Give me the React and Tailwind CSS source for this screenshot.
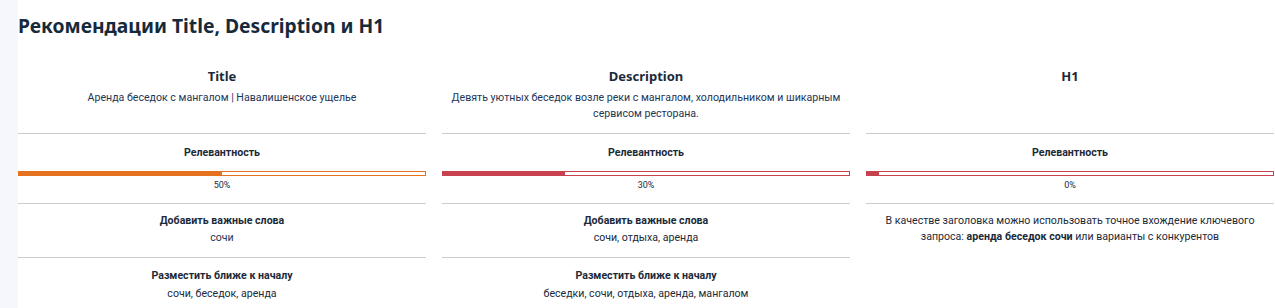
const columns = [
  {
    name: 'Title',
    text: 'Аренда беседок с мангалом | Навалишенское ущелье',
    percent: 50,
    fill: 50,
    color: 'orange',
  },
  {
    name: 'Description',
    text: 'Девять уютных беседок возле реки с мангалом, холодильником и шикарным сервисом ресторана.',
    percent: 30,
    fill: 30,
    color: 'red',
  },
  {
    name: 'H1',
    text: '',
    percent: 0,
    fill: 3,
    color: 'red',
  },
]

function Bar({ fill, color }) {
  const border = color === 'orange' ? 'border-[#e6711f]' : 'border-[#c8414f]'
  const bg = color === 'orange' ? 'bg-[#e6711f]' : 'bg-[#c8414f]'
  return (
    <div className={`h-[5px] w-full border ${border} bg-white`}>
      <div className={`h-full ${bg}`} style={{ width: `${fill}%` }} />
    </div>
  )
}

export default function App() {
  return (
    <div className="flex min-h-[308px] bg-white font-['Roboto',sans-serif] text-[#1b2a3a]">
      <div className="w-[18px] shrink-0 bg-[#f6f7fd]" />
      <div className="flex-1 pr-[1px]">
        <h2 className="pt-[12px] font-['Noto_Sans',sans-serif] text-[19.3px] font-bold leading-[27px] text-[#172a3c]">
          Рекомендации Title, Description и H1
        </h2>

        <div className="mt-[28px] grid grid-cols-3 gap-x-4 text-center">
          {columns.map((c) => (
            <div key={c.name} className="px-2 pb-[11px]">
              <div className="font-['Noto_Sans',sans-serif] text-[13px] font-bold leading-[18px]">{c.name}</div>
              <p className="mt-[5px] text-[10.6px] leading-[16px] text-[#1d3557]">{c.text}</p>
            </div>
          ))}

          {columns.map((c) => (
            <div key={c.name} className="border-t border-[#cccccc] pt-[11px] pb-[12px]">
              <div className="text-[10.6px] font-bold leading-[16px]">Релевантность</div>
              <div className="mt-[10px]">
                <Bar fill={c.fill} color={c.color} />
              </div>
              <div className="mt-[3px] text-[9px] leading-[12px]">{c.percent}%</div>
            </div>
          ))}

          <div className="border-t border-[#cccccc] pt-[9px] pb-[11px] text-[10.6px] leading-[16px]">
            <div className="font-bold">Добавить важные слова</div>
            <div className="mt-[1px] text-[#1d3557]">сочи</div>
          </div>
          <div className="border-t border-[#cccccc] pt-[9px] pb-[11px] text-[10.6px] leading-[16px]">
            <div className="font-bold">Добавить важные слова</div>
            <div className="mt-[1px]">сочи, отдыха, аренда</div>
          </div>
          <div className="border-t border-[#cccccc] px-2 pt-[9px] pb-[11px] text-[10.6px] leading-[16px]">
            В качестве заголовка можно использовать точное вхождение ключевого запроса:{' '}
            <b>аренда беседок сочи</b> или варианты с конкурентов
          </div>

          <div className="border-t border-[#cccccc] pt-[10px] text-[10.6px] leading-[16px]">
            <div className="font-bold">Разместить ближе к началу</div>
            <div className="mt-[2px]">сочи, беседок, аренда</div>
          </div>
          <div className="border-t border-[#cccccc] pt-[10px] text-[10.6px] leading-[16px]">
            <div className="font-bold">Разместить ближе к началу</div>
            <div className="mt-[2px]">беседки, сочи, отдыха, аренда, мангалом</div>
          </div>
          <div />
        </div>
      </div>
    </div>
  )
}
